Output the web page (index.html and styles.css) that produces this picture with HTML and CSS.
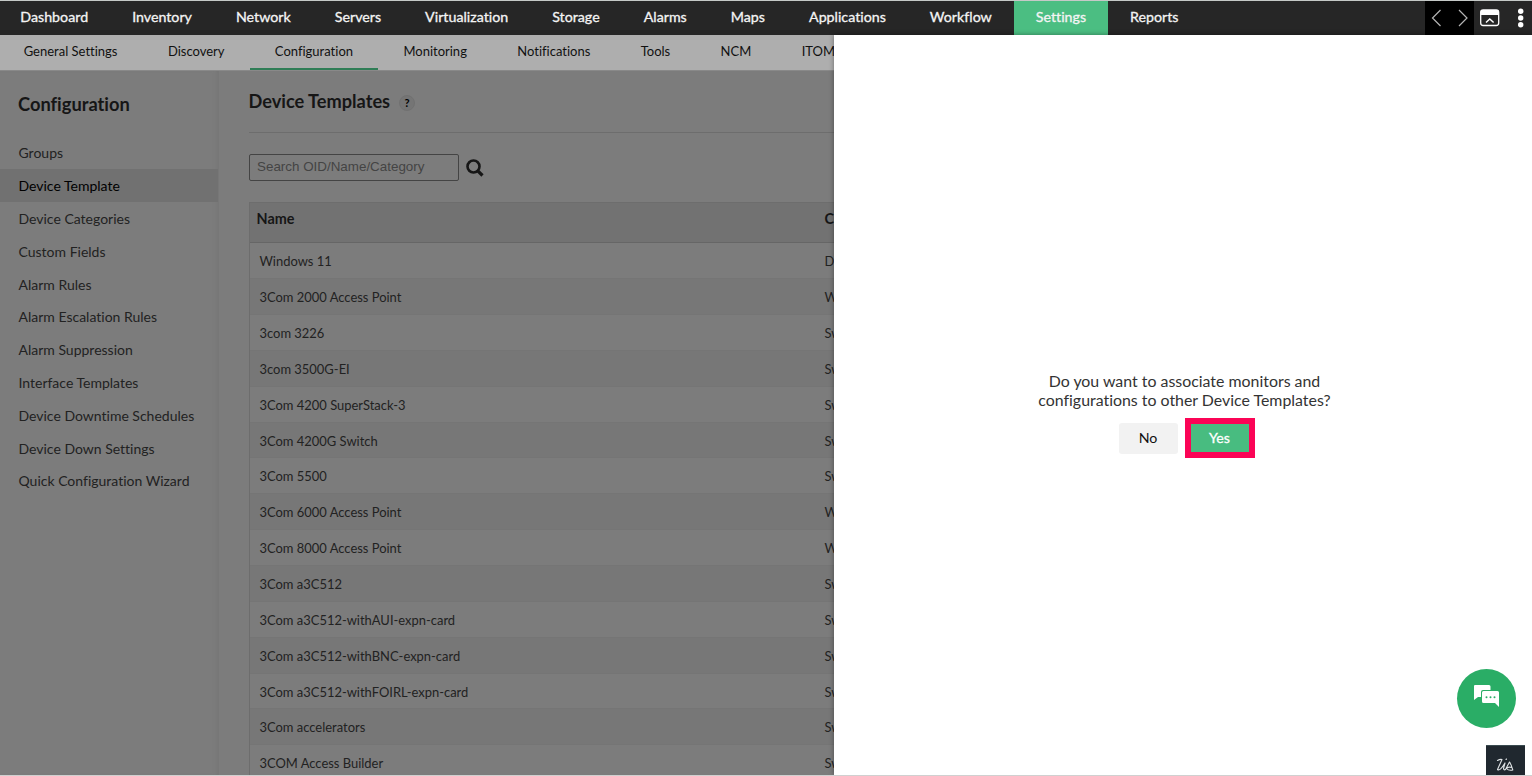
FILE: index.html
```
<!DOCTYPE html>
<html lang="en">

<head>
	<meta charset="utf-8">
	<title>Device Templates</title>
	<link rel="stylesheet" href="styles.css">
</head>

<body>
	<!-- main navigation -->
	<div class="topbar">
		<ul class="mainnav">
			<li>Dashboard</li>
			<li>Inventory</li>
			<li>Network</li>
			<li>Servers</li>
			<li>Virtualization</li>
			<li>Storage</li>
			<li>Alarms</li>
			<li>Maps</li>
			<li>Applications</li>
			<li>Workflow</li>
			<li class="active">Settings</li>
			<li>Reports</li>
		</ul>
		<div class="arrows">
			<svg width="49" height="34" viewBox="0 0 49 34" fill="none" stroke="#b5b5b5" stroke-width="1.2">
				<path d="M15.500 9 L7.500 17 L15.500 25" />
				<path d="M34 9 L42 17 L34 25" />
			</svg>
		</div>
		<svg class="topicons" width="58" height="34" viewBox="0 0 58 34">
			<rect x="6.700" y="9" width="18" height="15.500" rx="2.500" fill="none" stroke="#fff" stroke-width="1.300" />
			<path d="M6.500 14V11Q6.500 9 8.500 9H23Q25 9 25 11V14Z" fill="#fff" />
			<path d="M12 21.500 L15.800 18 L19.600 21.500" fill="none" stroke="#fff" stroke-width="1.500" />
			<circle cx="46.700" cy="10.300" r="2.700" fill="#fff" />
			<circle cx="46.700" cy="17" r="2.700" fill="#fff" />
			<circle cx="46.700" cy="23.700" r="2.700" fill="#fff" />
		</svg>
	</div>

	<ul class="subnav">
		<li>General Settings</li>
		<li>Discovery</li>
		<li class="active">Configuration</li>
		<li>Monitoring</li>
		<li>Notifications</li>
		<li>Tools</li>
		<li>NCM</li>
		<li>ITOM</li>
	</ul>

	<div class="page">
		<div class="sidebar">
			<h2>Configuration</h2>
			<ul>
				<li>Groups</li>
				<li class="active">Device Template</li>
				<li>Device Categories</li>
				<li>Custom Fields</li>
				<li>Alarm Rules</li>
				<li>Alarm Escalation Rules</li>
				<li>Alarm Suppression</li>
				<li>Interface Templates</li>
				<li>Device Downtime Schedules</li>
				<li>Device Down Settings</li>
				<li>Quick Configuration Wizard</li>
			</ul>
		</div>

		<div class="content">
			<div class="title">
				<h1>Device Templates</h1>
				<span class="help">?</span>
			</div>
			<div class="search">
				<input type="text" placeholder="Search OID/Name/Category">
				<svg width="18" height="18" viewBox="0 0 18 18" fill="none" stroke="#161616">
					<circle cx="7.500" cy="7.500" r="6" stroke-width="2.600" />
					<path d="M11.800 11.800 L16.500 16.500" stroke-width="3.200" />
				</svg>
			</div>
			<div class="table">
				<div class="row head"><span>Name</span><span>Category</span></div>
				<div class="row"><span>Windows 11</span><span>Desktop</span></div>
				<div class="row"><span>3Com 2000 Access Point</span><span>Wireless</span></div>
				<div class="row"><span>3com 3226</span><span>Switch</span></div>
				<div class="row"><span>3com 3500G-EI</span><span>Switch</span></div>
				<div class="row"><span>3Com 4200 SuperStack-3</span><span>Switch</span></div>
				<div class="row"><span>3Com 4200G Switch</span><span>Switch</span></div>
				<div class="row"><span>3Com 5500</span><span>Switch</span></div>
				<div class="row"><span>3Com 6000 Access Point</span><span>Wireless</span></div>
				<div class="row"><span>3Com 8000 Access Point</span><span>Wireless</span></div>
				<div class="row"><span>3Com a3C512</span><span>Switch</span></div>
				<div class="row"><span>3Com a3C512-withAUI-expn-card</span><span>Switch</span></div>
				<div class="row"><span>3Com a3C512-withBNC-expn-card</span><span>Switch</span></div>
				<div class="row"><span>3Com a3C512-withFOIRL-expn-card</span><span>Switch</span></div>
				<div class="row"><span>3Com accelerators</span><span>Switch</span></div>
				<div class="row"><span>3COM Access Builder</span><span>Switch</span></div>
			</div>
		</div>
	</div>

	<!-- slide-in panel over the page -->
	<div class="panel">
		<p>Do you want to associate monitors and<br>configurations to other Device Templates?</p>
		<div class="buttons">
			<button class="btn">No</button>
			<span class="highlight"><button class="btn yes">Yes</button></span>
		</div>
	</div>

	<div class="chat">
		<svg width="26" height="24" viewBox="0 0 26 24">
			<path d="M1 0H15Q16.500 0 16.500 1.500V5H9Q7 5 7 7V12H4L0 15V1Q0 0 1 0Z" fill="#fff" />
			<path d="M9.500 6H23.500Q25 6 25 7.500V22L21 18H9.500Q8 18 8 16.500V7.500Q8 6 9.500 6Z" fill="#fff" />
			<g fill="#2aad66">
				<circle cx="12.500" cy="12.300" r="1" />
				<circle cx="16.500" cy="12.300" r="1" />
				<circle cx="20.500" cy="12.300" r="1" />
			</g>
		</svg>
	</div>
	<div class="zia">
		<svg width="18" height="14" viewBox="0 0 18 14" fill="none" stroke="#dfe3e5" stroke-width="1.100" stroke-linecap="round" stroke-linejoin="round">
			<path d="M1.500 2.500Q4 1 6 1.500L1.500 11.500Q4 13.500 9 5L7.500 10.500Q8 12.500 9.500 11.500L13.500 4Q15.500 7 16.800 12Q12.500 12.800 10.500 10.500Q12 8.500 16 9.500" />
			<path d="M10 1.500L10.500 1" />
		</svg>
	</div>
</body>

</html>
```
FILE: styles.css
```
* {
	box-sizing: border-box;
}

body {
	margin: 0;
	height: 776px;
	overflow: hidden;
	position: relative;
	display: flex;
	flex-direction: column;
	font-family: Lato, "Liberation Sans", sans-serif;
	font-variant-ligatures: none;
	background: #7c7c7c;
	border-top: 1px solid #c5c9c7;
	border-bottom: 1px solid #d0d0d0;
}

ul {
	list-style: none;
	margin: 0;
	padding: 0;
}

/* top navigation */
.topbar {
	display: flex;
	flex: none;
	height: 34px;
	background: #262626;
}

.mainnav {
	display: flex;
	flex: 1;
}

.mainnav li {
	padding: 0 22px;
	color: #f4f4f4;
	font-size: 14.24px;
	line-height: 32px;
	-webkit-text-stroke: 0.3px #f4f4f4;
}

.mainnav li:first-child {
	padding-left: 20.3px;
}

.mainnav .active {
	background: #4bbe82;
}

.arrows {
	width: 49px;
	background: #000;
}

.subnav {
	display: flex;
	flex: none;
	height: 35px;
	background: #aeaeae;
}

.subnav li {
	padding: 0 25.2px;
	font-size: 13px;
	line-height: 32px;
	color: #111;
}

.subnav li:first-child {
	padding-left: 23.7px;
}

.subnav .active {
	border-bottom: 2px solid #2f7d56;
}

.page {
	display: flex;
	flex: 1;
	min-height: 0;
	border-top: 1px solid #898989;
}

/* left menu */
.sidebar {
	width: 219px;
	flex: none;
	border-right: 1px solid #777;
	box-shadow: inset -4px 0 4px -3px #757575;
}

.sidebar h2 {
	margin: 0;
	padding: 21px 18px 0;
	height: 65.4px;
	font-size: 18.3px;
	line-height: 24px;
	color: #161616;
}

.sidebar li {
	padding-left: 18.5px;
	height: 32.8px;
	line-height: 33px;
	font-size: 14px;
	color: #222;
}

.sidebar .active {
	background: #717171;
	color: #000;
}

/* templates list */
.content {
	flex: 1;
	padding-left: 30px;
}

.title {
	display: flex;
	height: 62px;
	padding-top: 18px;
	gap: 9px;
	border-bottom: 1px solid #6d6d6d;
}

.title h1 {
	margin: 0 0 0 -0.5px;
	font-size: 18.2px;
	line-height: 25px;
	color: #161616;
}

.help {
	width: 16px;
	height: 16px;
	margin-top: 6px;
	border: 1px solid #717171;
	border-radius: 50%;
	background: #757575;
	font-size: 11px;
	font-weight: bold;
	line-height: 14px;
	text-align: center;
}

.search {
	display: flex;
	padding-top: 21px;
	height: 69px;
	gap: 7px;
}

.search input {
	width: 210px;
	height: 27px;
	padding: 0 7px 2px;
	background: transparent;
	border: 1px solid #444;
	border-radius: 2px;
	font-family: "Liberation Sans", Arial, sans-serif;
	font-size: 13.4px;
}

.search input::placeholder {
	color: #444;
}

.search svg {
	margin-top: 5px;
}

.table {
	border: 1px solid #6d6d6d;
}

.row {
	display: flex;
	height: 35.87px;
	padding-left: 9.5px;
	border-bottom: 1px solid #757575;
	font-size: 12.95px;
	line-height: 37px;
	color: #222;
}

.row span:first-child {
	width: 565px;
}

.row:nth-child(odd) {
	background: #777;
}

.row.head {
	height: 40.3px;
	padding-left: 6.5px;
	border-bottom-color: #666;
	background: #727272;
	font-size: 14.4px;
	font-weight: bold;
	line-height: 31px;
	color: #161616;
}

.row.head span:first-child {
	width: 568px;
}

.panel {
	position: absolute;
	top: 34px;
	right: 0;
	bottom: 0;
	width: 698px;
	padding-top: 336px;
	background: #fff;
	box-shadow: 0 0 5px rgba(0, 0, 0, 0.4);
	text-align: center;
}

.panel p {
	margin: 0;
	padding-left: 3px;
	font-size: 15.9px;
	line-height: 19px;
	color: #333;
}

.buttons {
	display: flex;
	justify-content: center;
	align-items: center;
	gap: 7px;
	margin-top: 9px;
	padding-left: 7px;
}

.btn {
	width: 59px;
	height: 31px;
	padding: 0 0 2px;
	border: 0;
	border-radius: 3px;
	background: #f2f2f2;
	font-family: Lato, sans-serif;
	font-size: 14.2px;
	color: #111;
}

/* pink frame round the Yes button */
.highlight {
	display: flex;
	border: 6px solid #fb0456;
}

.btn.yes {
	width: 58px;
	height: 28px;
	border-radius: 0;
	background: #48bc80;
	color: #fff;
	-webkit-text-stroke: 0.3px #fff;
}

.chat {
	position: absolute;
	left: 1457px;
	top: 668px;
	width: 59px;
	height: 59px;
	padding: 16px 0 0 17px;
	border-radius: 50%;
	background: #2aad66;
}

.zia {
	position: absolute;
	left: 1486px;
	top: 744px;
	width: 39px;
	height: 30px;
	padding: 10px 0 0 10px;
	background: #20282f;
	border-top: 1px solid #3a4b50;
}
```
